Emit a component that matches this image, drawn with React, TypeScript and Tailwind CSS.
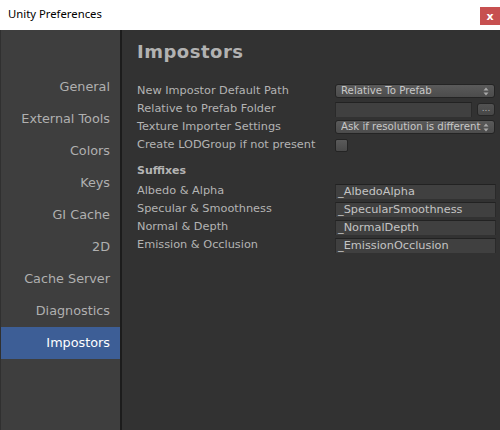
import React from "react";

const font = { fontFamily: '"DejaVu Sans", Verdana, sans-serif' };

function Arrows() {
  return (
    <svg width="6" height="9" viewBox="0 0 6 9" className="shrink-0">
      <path d="M3 0.5 L5.5 3.5 L0.5 3.5 Z" fill="#a8a8a8" />
      <path d="M3 8.5 L5.5 5.5 L0.5 5.5 Z" fill="#a8a8a8" />
    </svg>
  );
}

function Dropdown({ text }: { text: string }) {
  return (
    <div className="h-[14px] w-[160px] flex items-center justify-between pl-[5px] pr-[5px] rounded-[3px] border border-[#242424] bg-gradient-to-b from-[#5a5a5a] to-[#4c4c4c] text-[#c8c8c8] text-[10.2px] leading-none">
      <span className="whitespace-nowrap overflow-hidden">{text}</span>
      <Arrows />
    </div>
  );
}

function Field({ text, w = "w-[161px]" }: { text: string; w?: string }) {
  return (
    <div className={`h-[15px] ${w} flex items-center px-[2px] bg-[#404040] border-t border-[#222222] border-x border-x-[#2a2a2a] text-[#c4c4c4] text-[11.3px] leading-none whitespace-nowrap`}>
      {text}
    </div>
  );
}

const sideItems = [
  "General",
  "External Tools",
  "Colors",
  "Keys",
  "GI Cache",
  "2D",
  "Cache Server",
  "Diagnostics",
  "Impostors",
];

export default function App() {
  return (
    <div className="w-[500px] h-[430px] flex flex-col overflow-hidden bg-white" style={font}>
      <div className="h-[30px] flex items-start justify-between bg-white">
        <span
          className="ml-[8px] mt-[8px] text-[11.3px] text-black leading-none"
          style={{ fontFamily: '"Noto Sans", "Open Sans", sans-serif' }}
        >
          Unity Preferences
        </span>
        <div className="mt-[7px] w-[20px] h-[18px] bg-[#c75050] flex items-center justify-center text-white text-[11px] font-bold leading-none">
          x
        </div>
      </div>
      <div className="flex-1 flex min-h-0">
        <div className="w-[120px] bg-[#3e3e3e] border-l border-[#303030] flex flex-col pt-[41px]">
          {sideItems.map((s) => (
            <div
              key={s}
              className={`h-[32px] flex items-center justify-end pr-[10px] text-[12.8px] ${
                s === "Impostors" ? "bg-[#3d5e96] text-white" : "text-[#b0b0b0]"
              }`}
            >
              {s}
            </div>
          ))}
        </div>
        <div className="w-[2px] bg-[#1c1c1c]" />
        <div className="flex-1 bg-[#323232] pl-[15px] pt-[11px] text-[#b4b4b4]">
          <div className="text-[18px] font-bold leading-none tracking-[0.5px] h-[22px] flex items-center text-[#b2b2b2]">
            Impostors
          </div>
          <div className="mt-[19px] flex flex-col text-[11.3px]">
            <div className="h-[18px] flex items-center justify-between pr-[5px]">
              <span>New Impostor Default Path</span>
              <Dropdown text="Relative To Prefab" />
            </div>
            <div className="h-[18px] flex items-center justify-between pr-[5px]">
              <span>Relative to Prefab Folder</span>
              <div className="flex items-center gap-[5px]">
                <div className="h-[15px] w-[137px] bg-[#404040] border-t border-[#222222] border-x border-x-[#2a2a2a]" />
                <div className="h-[13px] w-[18px] rounded-[3px] border border-[#262626] bg-gradient-to-b from-[#525252] to-[#474747] flex items-center justify-center text-[9px] leading-none text-[#b0b0b0] pb-[2px]">
                  ...
                </div>
              </div>
            </div>
            <div className="h-[18px] flex items-center justify-between pr-[5px]">
              <span>Texture Importer Settings</span>
              <Dropdown text="Ask if resolution is different" />
            </div>
            <div className="h-[18px] flex items-center pr-[5px]">
              <span className="w-[198px]">Create LODGroup if not present</span>
              <div className="h-[13px] w-[13px] rounded-[2px] border border-[#242424] bg-gradient-to-b from-[#5a5a5a] to-[#4a4a4a]" />
            </div>
          </div>
          <div className="mt-[8px] h-[18px] flex items-center font-bold text-[11px]">Suffixes</div>
          <div className="mt-[2px] flex flex-col text-[11.3px]">
            {[
              ["Albedo & Alpha", "_AlbedoAlpha"],
              ["Specular & Smoothness", "_SpecularSmoothness"],
              ["Normal & Depth", "_NormalDepth"],
              ["Emission & Occlusion", "_EmissionOcclusion"],
            ].map(([l, v]) => (
              <div key={l} className="h-[18px] flex items-center justify-between pr-[4px]">
                <span>{l}</span>
                <Field text={v} />
              </div>
            ))}
          </div>
        </div>
      </div>
    </div>
  );
}
